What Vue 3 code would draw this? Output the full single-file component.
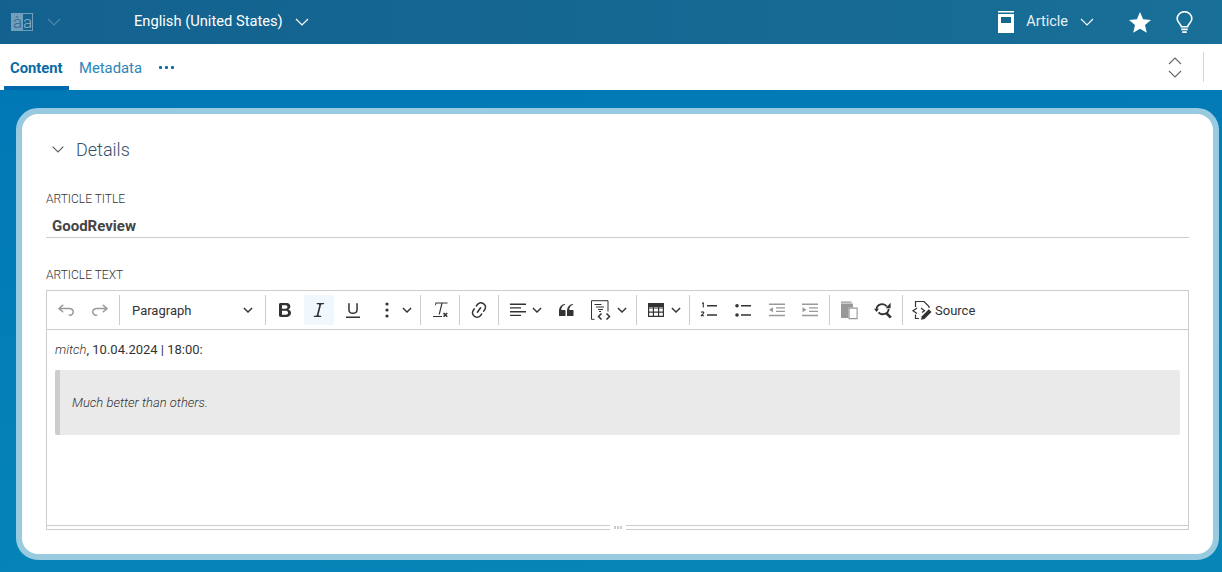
<script setup>
const undoPath = 'm5.042 9.367 2.189 1.837a.75.75 0 0 1-.965 1.149l-3.788-3.18a.747.747 0 0 1-.21-.284.75.75 0 0 1 .17-.945L6.23 4.762a.75.75 0 1 1 .964 1.15L4.863 7.866h8.917A.75.75 0 0 1 14 7.9a4 4 0 1 1-1.477 7.718l.344-1.489a2.5 2.5 0 1 0 1.094-4.73l.008-.032H5.042z'
const redoPath = 'm14.958 9.367-2.189 1.837a.75.75 0 0 0 .965 1.149l3.788-3.18a.747.747 0 0 0 .21-.284.75.75 0 0 0-.17-.945L13.77 4.762a.75.75 0 1 0-.964 1.15l2.331 1.955H6.22A.75.75 0 0 0 6 7.9a4 4 0 1 0 1.477 7.718l-.344-1.489A2.5 2.5 0 1 1 6.039 9.4l-.008-.032h8.927z'
const boldPath = 'M10.187 17H5.773c-.637 0-1.092-.138-1.364-.415-.273-.277-.409-.718-.409-1.323V4.738c0-.617.14-1.062.419-1.332.279-.27.73-.406 1.354-.406h4.68c.69 0 1.288.041 1.793.124.506.083.96.242 1.36.478.341.197.644.447.906.75a3.262 3.262 0 0 1 .808 2.162c0 1.401-.722 2.426-2.167 3.075C15.05 10.175 16 11.315 16 13.01a3.756 3.756 0 0 1-2.296 3.504 6.1 6.1 0 0 1-1.517.377c-.571.073-1.238.11-2 .11zm-.217-6.217H7v4.087h3.069c1.977 0 2.965-.69 2.965-2.072 0-.707-.256-1.22-.768-1.537-.512-.319-1.277-.478-2.296-.478zM7 5.13v3.619h2.606c.729 0 1.292-.067 1.69-.2a1.6 1.6 0 0 0 .91-.765c.165-.267.247-.566.247-.897 0-.707-.26-1.176-.778-1.409-.519-.232-1.31-.348-2.375-.348H7z'
const italicPath = 'm9.586 14.633.021.004c-.036.335.095.655.393.962.082.083.173.15.274.201h1.474a.6.6 0 1 1 0 1.2H5.304a.6.6 0 0 1 0-1.2h1.15c.474-.07.809-.182 1.005-.334.157-.122.291-.32.404-.597l2.416-9.55a1.053 1.053 0 0 0-.281-.823 1.12 1.12 0 0 0-.442-.296H8.15a.6.6 0 0 1 0-1.2h6.443a.6.6 0 1 1 0 1.2h-1.195c-.376.056-.65.155-.823.296-.215.175-.423.439-.623.79l-2.366 9.347z'
const underlinePath = 'M3 18v-1.5h14V18zm2.2-8V3.6c0-.4.4-.6.8-.6.3 0 .7.2.7.6v6.2c0 2 1.3 2.8 3.2 2.8 1.9 0 3.4-.9 3.4-2.9V3.6c0-.3.4-.5.8-.5.3 0 .7.2.7.5V10c0 2.7-2.2 4-4.9 4-2.6 0-4.7-1.2-4.7-4z'
const linkPath = 'm11.077 15 .991-1.416a.75.75 0 1 1 1.229.86l-1.148 1.64a.748.748 0 0 1-.217.206 5.251 5.251 0 0 1-8.503-5.955.741.741 0 0 1 .12-.274l1.147-1.639a.75.75 0 1 1 1.228.86L4.933 10.7l.006.003a3.75 3.75 0 0 0 6.132 4.294l.006.004zm5.494-5.335a.748.748 0 0 1-.12.274l-1.147 1.639a.75.75 0 1 1-1.228-.86l.86-1.23a3.75 3.75 0 0 0-6.144-4.301l-.86 1.229a.75.75 0 0 1-1.229-.86l1.148-1.64a.748.748 0 0 1 .217-.206 5.251 5.251 0 0 1 8.503 5.955zm-4.563-2.532a.75.75 0 0 1 .184 1.045l-3.155 4.505a.75.75 0 1 1-1.229-.86l3.155-4.506a.75.75 0 0 1 1.045-.184z'
const quotePath = 'M3 10.423a6.5 6.5 0 0 1 6.056-6.408l.038.67C6.448 5.423 5.354 7.663 5.22 10H9c.552 0 .5.432.5.986v4.511c0 .554-.448.503-1 .503h-5c-.552 0-.5-.449-.5-1.003v-4.574zm8 0a6.5 6.5 0 0 1 6.056-6.408l.038.67c-2.646.739-3.74 2.979-3.873 5.315H17c.552 0 .5.432.5.986v4.511c0 .554-.448.503-1 .503h-5c-.552 0-.5-.449-.5-1.003v-4.574z'
</script>

<template>
  <div class="page">
    <header class="topbar">
      <div class="logo"><span class="logo-left">à</span><span class="logo-right">a</span></div>
      <svg class="chev chev-dim" width="14" height="8" viewBox="0 0 14 8"><path d="M1 1l6 6 6-6" /></svg>
      <span class="lang">English (United States)</span>
      <svg class="chev" width="14" height="8" viewBox="0 0 14 8"><path d="M1 1l6 6 6-6" /></svg>
      <div class="topbar-right">
        <svg class="book" width="16" height="22" viewBox="0 0 16 22">
          <path fill="#fff" d="M0 0h16v1.5H0zM0 3h16v19H0z" />
          <rect x="3" y="6" width="10" height="6" fill="#16688f" />
        </svg>
        <span class="type">Article</span>
        <svg class="chev" width="14" height="8" viewBox="0 0 14 8"><path d="M1 1l6 6 6-6" /></svg>
        <svg class="star" width="22" height="21" viewBox="0 0 22 21">
          <path fill="#fff" d="M11 0l3.1 7.2 7.9.7-6 5.1 1.8 7.700L11 16.700l-6.800 4 1.800-7.700-6-5.100 7.900-.7z" />
        </svg>
        <svg class="bulb" width="17" height="22" viewBox="0 0 18 24" fill="none" stroke="#fff" stroke-width="1.800">
          <path d="M5.600 17.200c0-2.600-4.600-4.500-4.600-8.800a8 7.600 0 0 1 16 0c0 4.300-4.600 6.200-4.600 8.800z" />
          <path d="M5.500 20h7M6.500 23h5" />
        </svg>
      </div>
    </header>

    <nav class="tabs">
      <a class="tab active">Content</a>
      <a class="tab">Metadata</a>
      <div class="more"><i></i><i></i><i></i></div>
      <div class="tabs-right">
        <div class="updown">
          <svg width="14" height="8" viewBox="0 0 14 8"><path d="M1 7l6-6 6 6" /></svg>
          <svg width="14" height="8" viewBox="0 0 14 8"><path d="M1 1l6 6 6-6" /></svg>
        </div>
        <div class="tabs-sep"></div>
      </div>
    </nav>

    <main class="card">
      <div class="section-head">
        <svg width="12" height="7" viewBox="0 0 12 7"><path d="M.7.7L6 6 11.300.7" /></svg>
        <span>Details</span>
      </div>

      <label class="field-label title-label">ARTICLE TITLE</label>
      <div class="title-value">GoodReview</div>

      <label class="field-label text-label">ARTICLE TEXT</label>

      <div class="editor">
        <div class="toolbar">
          <button class="btn off"><svg viewBox="0 0 20 20"><path :d="undoPath" /></svg></button>
          <button class="btn off"><svg viewBox="0 0 20 20"><path :d="redoPath" /></svg></button>
          <span class="sep"></span>
          <button class="para">
            <span>Paragraph</span>
            <svg class="caret" viewBox="0 0 10 10"><path d="M.9 2.900L5 7l4.100-4.100" /></svg>
          </button>
          <span class="sep"></span>
          <button class="btn"><svg viewBox="0 0 20 20"><path :d="boldPath" /></svg></button>
          <button class="btn on"><svg viewBox="0 0 20 20"><path :d="italicPath" /></svg></button>
          <button class="btn"><svg viewBox="0 0 20 20"><path :d="underlinePath" /></svg></button>
          <button class="split w44">
            <svg viewBox="0 0 20 20"><circle cx="10" cy="4" r="1.600" /><circle cx="10" cy="10" r="1.600" /><circle cx="10" cy="16" r="1.600" /></svg>
            <svg class="caret" viewBox="0 0 10 10"><path d="M.9 2.900L5 7l4.100-4.100" /></svg>
          </button>
          <span class="sep"></span>
          <button class="btn">
            <svg viewBox="0 0 20 20">
              <path d="M5.500 2.500h12v1.100h-5l-2.700 10.900H8.600l2.700-10.900H6.300l-.5 1.700H4.900zM3 16h9v1.100H3z" />
              <path d="M13.500 13l3.700 3.700M17.200 13l-3.700 3.700" fill="none" stroke="#333" stroke-width="1.600" />
            </svg>
          </button>
          <span class="sep"></span>
          <button class="btn"><svg viewBox="0 0 20 20"><path :d="linkPath" /></svg></button>
          <span class="sep"></span>
          <button class="split w44 g4">
            <svg viewBox="0 0 20 20"><path d="M2 3.500h16V5H2zM2 7.200h11v1.300H2zM2 11h16v1.400H2zM2 14.700h11V16H2z" /></svg>
            <svg class="caret" viewBox="0 0 10 10"><path d="M.9 2.900L5 7l4.100-4.100" /></svg>
          </button>
          <button class="btn"><svg viewBox="0 0 20 20"><path :d="quotePath" /></svg></button>
          <button class="split w47 g7">
            <svg class="line" viewBox="0 0 20 20" stroke-width="1">
              <path d="M4.500 19.300H1.500V.7H18V11.500" />
              <path d="M4.500 4.500h7M6 7h8M8 9.500h5M9 11.500h2" />
              <path d="M11.500 13.500L8.500 16.500l3 3M16.500 13.500l3 3-3 3" stroke-width="1.500" />
            </svg>
            <svg class="caret" viewBox="0 0 10 10"><path d="M.9 2.900L5 7l4.100-4.100" /></svg>
          </button>
          <span class="sep"></span>
          <button class="split w44">
            <svg viewBox="0 0 20 20">
              <path fill="#333" d="M2 3h16v4H2z" />
              <path fill="none" stroke="#333" stroke-width="1.200" d="M2.600 3.600h14.800v12.800H2.600zM2.600 8h14.800M2.600 12.200h14.800M7.400 5v11M12.600 5v11" />
            </svg>
            <svg class="caret" viewBox="0 0 10 10"><path d="M.9 2.900L5 7l4.100-4.100" /></svg>
          </button>
          <span class="sep"></span>
          <button class="btn">
            <svg class="nudge" viewBox="0 0 20 20">
              <path d="M8 5h10v1.400H8zM8 14.300h10v1.400H8z" />
              <path stroke="#333" stroke-width="1.100" fill="none" d="M3.100 3.600l1.200-.7v4.500M2.300 12.700c.3-1.100 2.500-1.100 2.500.1 0 1-1.600 1.500-2.500 2.900h2.800" />
            </svg>
          </button>
          <button class="btn">
            <svg class="nudge" viewBox="0 0 20 20">
              <circle cx="4" cy="5.700" r="1.800" /><circle cx="4" cy="15" r="1.800" />
              <path d="M8 5h10v1.400H8zM8 14.300h10v1.400H8z" />
            </svg>
          </button>
          <button class="btn off">
            <svg class="nudge" viewBox="0 0 20 20"><path d="M2 3.500h16V5H2zM9 7.300h9v1.300H9zM9 10.800h9v1.300H9zM2 14.800h16v1.400H2zM2 9.800l4-2.500v5z" /></svg>
          </button>
          <button class="btn off w29">
            <svg class="nudge" viewBox="0 0 20 20"><path d="M2 3.500h16V5H2zM9 7.300h9v1.300H9zM9 10.800h9v1.300H9zM2 14.800h16v1.400H2zM6.500 9.800l-4-2.500v5z" /></svg>
          </button>
          <span class="sep"></span>
          <button class="btn off">
            <svg viewBox="0 0 20 20">
              <path d="M2 1.500h10.500v1.200H2zM2 3.500h12v4H9.500v10.500H2.800A.8.800 0 0 1 2 17.200z" />
              <path fill="#fff" stroke="#333" stroke-width="1.100" d="M10.100 8.100h8v10.500h-8z" />
            </svg>
          </button>
          <button class="btn">
            <svg class="line nudge" viewBox="0 0 20 20" stroke-width="1.800">
              <path d="M3.400 9.500a5.900 5.900 0 0 1 10.400-3.200M15.700 8.800a5.900 5.900 0 0 1-10.200 3.500" />
              <path fill="#333" stroke="none" d="M1 8.700h5L3.500 12zM17.600 2.800v5.500h-5z" />
              <path stroke-width="2.600" d="M13.200 13l4.600 4.700" />
            </svg>
          </button>
          <span class="sep"></span>
          <button class="source">
            <svg class="line" viewBox="0 0 20 20" stroke-width="1.200">
              <path d="M3.500 7V1.500h8.500l5 5v1.500M3.500 14.500v4h3.500" />
              <path d="M5 8L1 10.700l4 2.700M9 8l3.500 2.700-2.500 1.900" />
              <path d="M9 19.800l.8-3.500 7-7 2.700 2.700-7 7z" fill="#333" stroke="none" />
            </svg>
            <span>Source</span>
          </button>
        </div>

        <div class="content">
          <p><em>mitch</em>, 10.04.2024 | 18:00:</p>
          <blockquote>Much better than others.</blockquote>
        </div>

        <div class="resize">
          <span class="grip"><i></i><i></i><i></i></span>
        </div>
      </div>
    </main>
  </div>
</template>

<style>
html, body {
  margin: 0;
}
</style>

<style scoped>
.page {
  width: 1222px;
  height: 572px;
  overflow: hidden;
  display: flex;
  flex-direction: column;
  font-family: Roboto, "Open Sans", sans-serif;
  background: linear-gradient(175deg, #0076b6 0%, #0686b7 100%);
}

.topbar {
  height: 44px;
  flex: none;
  display: flex;
  align-items: center;
  padding-left: 11px;
  color: #fff;
  background: linear-gradient(90deg, #13618f 0%, #186f97 100%);
}

.logo {
  width: 22px;
  height: 18px;
  box-sizing: border-box;
  border: 1px solid #6f9fbc;
  display: flex;
  font-size: 17px;
  line-height: 17px;
  font-weight: 300;
  color: #8fb6cd;
  overflow: hidden;
}

.logo-left {
  width: 11px;
  flex: none;
  text-align: center;
  background: #6f9fbc;
  color: #33668c;
}

.logo-right {
  flex: 1;
  text-align: center;
}

.chev {
  fill: none;
  stroke: #fff;
  stroke-width: 1.200;
}

.chev-dim {
  margin-left: 14px;
  stroke: #4f88ab;
}

.lang {
  margin: 0 12px 2px 73px;
  font-size: 14.700px;
}

.topbar-right {
  margin-left: auto;
  display: flex;
  align-items: center;
  padding-right: 29px;
}

.type {
  margin: 0 12px 2px 12px;
  font-size: 14.500px;
  color: #e6f0f5;
}

.star {
  margin-left: 35px;
}

.bulb {
  margin-left: 25px;
}

.tabs {
  height: 46px;
  flex: none;
  background: #fff;
  display: flex;
  align-items: stretch;
  padding-left: 4px;
  box-sizing: border-box;
}

.tab {
  padding: 0 6px;
  margin-right: 4px;
  line-height: 49px;
  font-size: 14.800px;
  color: #2b86ba;
}

.tab.active {
  width: 53px;
  font-weight: 700;
  color: #0a6aa8;
  box-shadow: inset 0 -4px 0 #0068ad;
}

.more {
  margin-left: 7px;
  padding-top: 22px;
  display: flex;
  gap: 3px;
}

.more i {
  width: 3px;
  height: 3px;
  background: #0a6aa8;
  border-radius: 1px;
}

.tabs-right {
  margin-left: auto;
  display: flex;
  align-items: center;
  padding-right: 18px;
  gap: 21px;
}

.updown {
  display: flex;
  flex-direction: column;
  gap: 5px;
  margin-top: 1px;
}

.updown svg {
  display: block;
  fill: none;
  stroke: #666;
  stroke-width: 1.100;
}

.tabs-sep {
  width: 1px;
  height: 30px;
  background: #d5d5d5;
}

.card {
  margin: 18px 3px 12px 16px;
  flex: 1;
  box-sizing: border-box;
  border: 6px solid #99cbe0;
  border-radius: 22px;
  background: #fff;
  padding: 0 24px;
}

.section-head {
  display: flex;
  align-items: center;
  height: 20px;
  margin-top: 25px;
  padding-left: 6px;
  font-size: 18px;
  font-weight: 300;
  color: #35506b;
}

.section-head svg {
  fill: none;
  stroke: #5a5a5a;
  stroke-width: 1.100;
  margin-right: 12px;
}

.field-label {
  display: block;
  font-size: 12px;
  line-height: 14px;
  color: #333;
  font-weight: 300;
}

.title-label {
  margin-top: 33px;
}

.title-value {
  margin-top: 12px;
  padding: 0 6px 2px;
  font-size: 15px;
  line-height: 17px;
  font-weight: 700;
  color: #444;
  border-bottom: 1px solid #ccc;
  width: 1131px;
}

.text-label {
  margin-top: 30px;
}

.editor {
  width: 1143px;
  height: 240px;
  margin-top: 8px;
  box-sizing: border-box;
  border: 1px solid #ccc;
  border-bottom: none;
  display: flex;
  flex-direction: column;
}

.toolbar {
  height: 39px;
  flex: none;
  box-sizing: border-box;
  display: flex;
  align-items: center;
  gap: 4px;
  padding-left: 4px;
  border-bottom: 1px solid #ccc;
}

button {
  border: none;
  background: none;
  padding: 0;
  margin: 0;
  height: 30px;
  display: flex;
  align-items: center;
  justify-content: center;
  font-family: inherit;
  color: #333;
}

button svg {
  width: 20px;
  height: 20px;
  fill: #333;
  flex: none;
  overflow: visible;
}

button svg.line {
  fill: none;
  stroke: #333;
}

.nudge {
  margin-left: -1px;
}

.btn {
  width: 30px;
}

.btn.w29 {
  width: 29px;
}

.btn.on {
  background: #f0f7fd;
  border-radius: 2px;
}

.off svg {
  opacity: .5;
}

.split {
  padding-left: 5px;
  justify-content: flex-start;
  gap: 5px;
}

.split.g4 {
  gap: 4px;
}

.split.g7 {
  gap: 7px;
}

.w44 {
  width: 44px;
}

.w47 {
  width: 47px;
}

button svg.caret {
  width: 10px;
  height: 10px;
  fill: none;
  stroke: #333;
  stroke-width: 1.400;
}

.sep {
  width: 1px;
  height: 30px;
  background: #ccc;
  flex: none;
}

.para {
  width: 137px;
  padding: 0 8px 0 8px;
  box-sizing: border-box;
  justify-content: space-between;
  font-size: 13px;
}

.source {
  gap: 3px;
  padding-left: 5px;
  font-size: 13px;
}

.content {
  flex: 1;
  padding: 0 8px;
  font-size: 13px;
  color: #333;
}

.content p {
  margin: 12px 0 0;
  line-height: 16px;
}

.content em {
  font-style: italic;
  font-weight: 300;
}

blockquote {
  margin: 12px 0 0;
  height: 65px;
  line-height: 65px;
  padding: 0 12px;
  box-sizing: border-box;
  background: #eaeaea;
  border-left: 5px solid #ccc;
  border-radius: 2px;
  font-style: italic;
  font-weight: 300;
  color: #333;
}

.resize {
  height: 5px;
  flex: none;
  box-sizing: border-box;
  border-top: 1px solid #ccc;
  border-bottom: 1px solid #ccc;
  display: flex;
  justify-content: center;
  align-items: center;
}

.grip {
  width: 16px;
  height: 5px;
  background: #fff;
  display: flex;
  justify-content: center;
  align-items: center;
  gap: 1px;
}

.grip i {
  width: 2px;
  height: 3px;
  background: #ccc;
}
</style>
